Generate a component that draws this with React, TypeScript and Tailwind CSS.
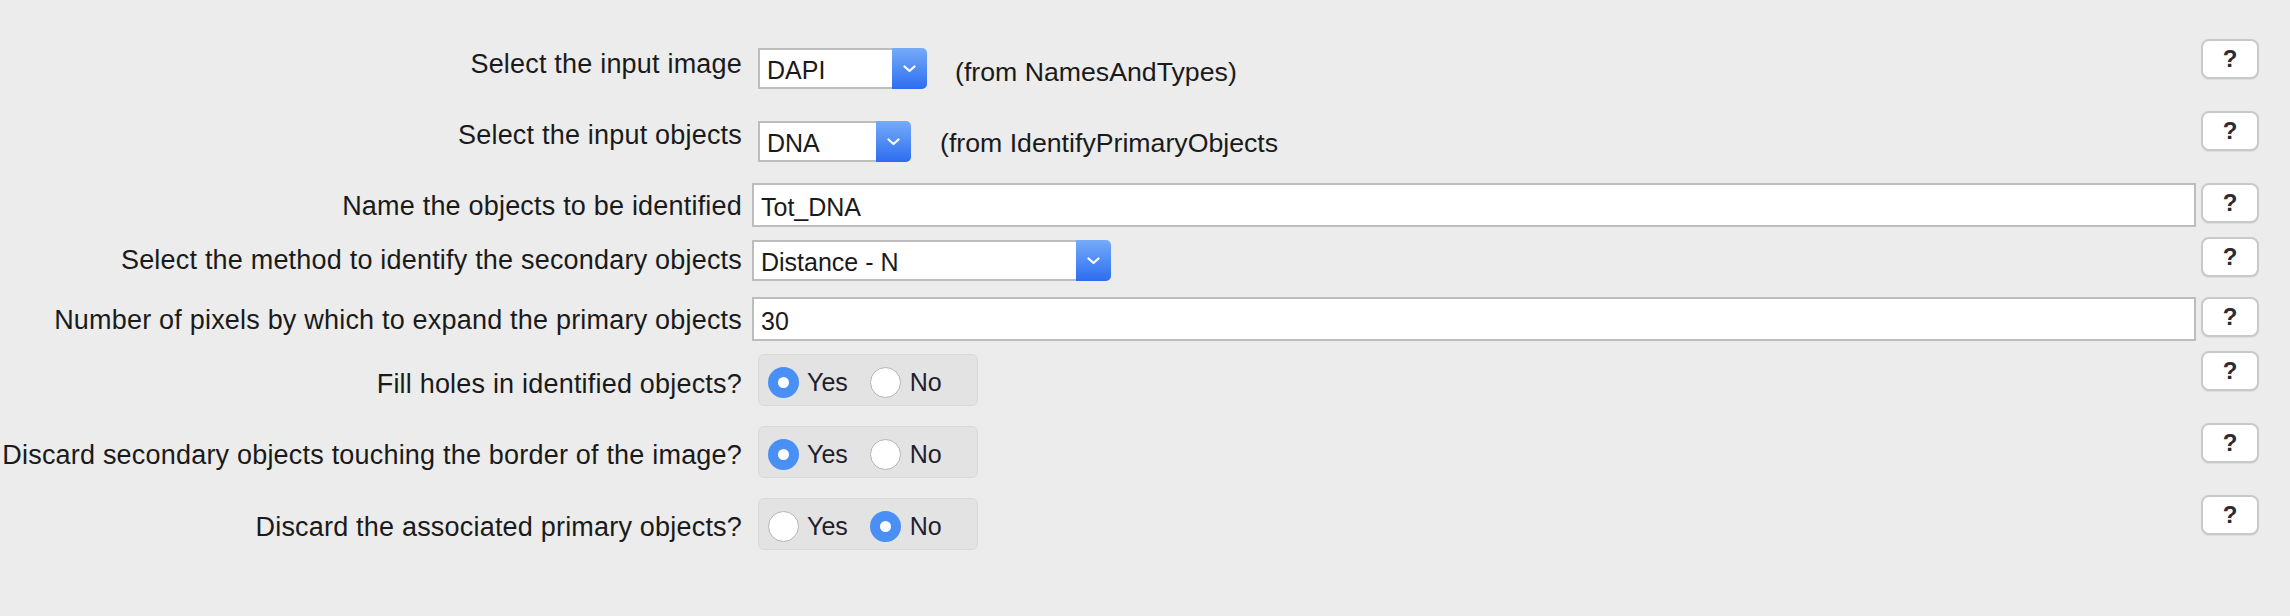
import React from 'react'

const font = "font-['Liberation_Sans',Arial,sans-serif]"

function HelpButton() {
    return (
        <div className="ml-[5px] flex h-[40px] w-[58px] shrink-0 items-center justify-center rounded-[8px] border-2 border-[#c9c9c9] bg-white text-[24px] font-bold leading-none text-[#2b2b35] shadow-[0_1px_0_rgba(0,0,0,0.06)]">
            ?
        </div>
    )
}

function Chevron() {
    return (
        <svg width="13" height="8" viewBox="0 0 13 8" fill="none">
            <path d="M1.5 1.5 L6.5 6 L11.5 1.5" stroke="white" strokeWidth="2.2" strokeLinecap="round" strokeLinejoin="round" />
        </svg>
    )
}

function Select({ value, className }: { value: string; className: string }) {
    return (
        <div className={`flex h-[41px] shrink-0 ${className}`}>
            <div className="flex flex-1 items-center border-2 border-r-0 border-[#bdbdbd] bg-white pl-[7px] pt-[4px] text-[25px] leading-none text-[#1a1a1a]">
                {value}
            </div>
            <div className="flex w-[35px] items-center justify-center rounded-r-[5px] bg-linear-to-b from-[#76abf8] to-[#2d6cf0]">
                <Chevron />
            </div>
        </div>
    )
}

function TextBox({ value }: { value: string }) {
    return (
        <div className="flex h-[44px] w-full items-center border-2 border-[#bdbdbd] bg-white pl-[7px] pt-[4px] text-[25px] leading-none text-[#1a1a1a]">
            {value}
        </div>
    )
}

function Radio({ on }: { on: boolean }) {
    if (on) {
        return (
            <div className="flex h-[31px] w-[31px] shrink-0 items-center justify-center rounded-full bg-[#4a8ff5]">
                <div className="h-[11px] w-[11px] rounded-full bg-white" />
            </div>
        )
    }
    return <div className="h-[31px] w-[31px] shrink-0 rounded-full border-[1.5px] border-[#b4b4b4] bg-white" />
}

function YesNo({ yes }: { yes: boolean }) {
    return (
        <div className="ml-[6px] mt-[3px] flex h-[52px] w-[220px] items-center rounded-[6px] border border-[#d9d9d9] bg-[#e3e3e3] pl-[9px] pt-[5px] text-[25px] leading-none text-[#1e1e2c]">
            <Radio on={yes} />
            <span className="ml-[8px]">Yes</span>
            <div className="ml-[22px]">
                <Radio on={!yes} />
            </div>
            <span className="ml-[9px]">No</span>
        </div>
    )
}

function Row({ h, labelMt, label, children }: { h: string; labelMt: string; label: string; children: React.ReactNode }) {
    return (
        <div className={`flex items-start ${h}`}>
            <div className={`w-[742px] shrink-0 whitespace-nowrap text-right text-[27px] leading-none tracking-[0.2px] text-[#1a1a1a] ${labelMt}`}>
                {label}
            </div>
            <div className="ml-[10px] flex w-[1444px] shrink-0 items-start">{children}</div>
            <HelpButton />
        </div>
    )
}

export default function App() {
    return (
        <div className={`min-h-[616px] w-[2290px] overflow-hidden bg-[#ececec] pt-[39px] ${font}`}>
            <Row h="h-[72px]" labelMt="mt-[12px]" label="Select the input image">
                <Select value="DAPI" className="ml-[6px] mt-[9px] w-[169px]" />
                <span className="ml-[28px] mt-[20px] text-[26.7px] leading-none text-[#1a1a1a]">(from NamesAndTypes)</span>
            </Row>
            <Row h="h-[72px]" labelMt="mt-[11px]" label="Select the input objects">
                <Select value="DNA" className="ml-[6px] mt-[10px] w-[153px]" />
                <span className="ml-[29px] mt-[19px] text-[26.7px] leading-none text-[#1a1a1a]">(from IdentifyPrimaryObjects</span>
            </Row>
            <Row h="h-[54px]" labelMt="mt-[10px]" label="Name the objects to be identified">
                <TextBox value="Tot_DNA" />
            </Row>
            <Row h="h-[60px]" labelMt="mt-[10px]" label="Select the method to identify the secondary objects">
                <Select value="Distance - N" className="mt-[3px] w-[359px]" />
            </Row>
            <Row h="h-[54px]" labelMt="mt-[10px]" label="Number of pixels by which to expand the primary objects">
                <TextBox value="30" />
            </Row>
            <Row h="h-[72px]" labelMt="mt-[20px]" label="Fill holes in identified objects?">
                <YesNo yes={true} />
            </Row>
            <Row h="h-[72px]" labelMt="mt-[19px]" label="Discard secondary objects touching the border of the image?">
                <YesNo yes={true} />
            </Row>
            <Row h="h-[72px]" labelMt="mt-[19px]" label="Discard the associated primary objects?">
                <YesNo yes={false} />
            </Row>
        </div>
    )
}
